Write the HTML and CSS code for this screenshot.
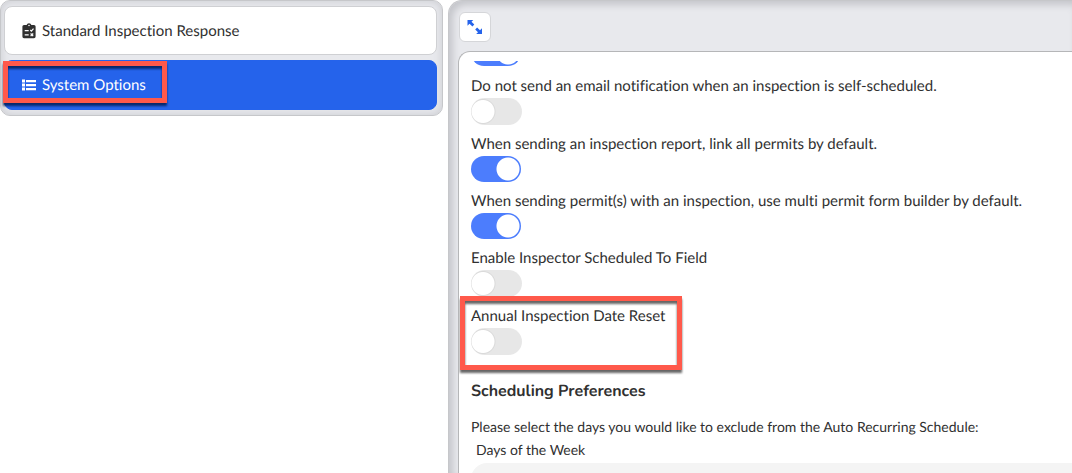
FILE: index.html
```html
<!DOCTYPE html>
<html lang="en">
<head>
<meta charset="utf-8">
<title>System Options</title>
<link rel="stylesheet" href="styles.css">
</head>
<body>
<div class="layout">
  <nav class="menu">
    <button class="menu-item" type="button">
      <svg class="menu-icon" viewBox="0 0 14 16" aria-hidden="true"><path fill="currentColor" fill-rule="evenodd" d="M2 2h2.600a2.500 2.500 0 0 1 4.800 0H12a1.600 1.600 0 0 1 1.600 1.600v10A1.600 1.600 0 0 1 12 15.200H2a1.600 1.600 0 0 1-1.600-1.600v-10A1.600 1.600 0 0 1 2 2zM7 1.700a.8.800 0 1 0 0 1.600.8.800 0 0 0 0-1.600z"/><path d="M2.700 7.600h4M2.700 11.800h4M8.300 7l1.100 1.200L11.500 5.700M8.600 10.500l2.600 2.600M11.200 10.500l-2.600 2.600" fill="none" stroke="#fff" stroke-width="1.200"/></svg>
      <span>Standard Inspection Response</span>
    </button>
    <button class="menu-item active" type="button">
      <svg class="menu-icon" viewBox="0 0 14 16" aria-hidden="true"><path fill="currentColor" d="M0 2.500h3v3H0zM0 6.500h3v3H0zM0 10.500h3v3H0zM4 3h10v2.200H4zM4 7h10v2.200H4zM4 11h10v2.200H4z"/></svg>
      <span>System Options</span>
      <span class="callout callout-menu"></span>
    </button>
  </nav>
  <main class="panel">
    <button class="expand" type="button" aria-label="Expand">
      <svg viewBox="0 0 16 16" aria-hidden="true"><path fill="#2563eb" d="M.5 1h5.800L4.500 2.800 7.300 5.600 5.400 7.500 2.500 4.700.5 6.700zM15 15H9.200L11 13.200 8.200 10.400 10.100 8.500 13 11.300 15 9.300z"/></svg>
    </button>
    <section class="card">
      <div class="scroller">
        <input class="switch scrolled" type="checkbox" checked aria-label="Previous option">
        <div class="option"><label for="o1">Do not send an email notification when an inspection is self-scheduled.</label><input class="switch" id="o1" type="checkbox"></div>
        <div class="option"><label for="o2">When sending an inspection report, link all permits by default.</label><input class="switch" id="o2" type="checkbox" checked></div>
        <div class="option"><label for="o3">When sending permit(s) with an inspection, use multi permit form builder by default.</label><input class="switch" id="o3" type="checkbox" checked></div>
        <div class="option"><label for="o4">Enable Inspector Scheduled To Field</label><input class="switch" id="o4" type="checkbox"></div>
        <div class="option"><label for="o5">Annual Inspection Date Reset</label><input class="switch" id="o5" type="checkbox"><span class="callout callout-option"></span></div>
        <h2>Scheduling Preferences</h2>
        <p>Please select the days you would like to exclude from the Auto Recurring Schedule:</p>
        <label class="field-label" for="days">Days of the Week</label>
        <input class="field" id="days" type="text">
      </div>
    </section>
  </main>
</div>
</body>
</html>
```
FILE: styles.css
```css
* { box-sizing: border-box; }
body {
  margin: 0;
  height: 100vh;
  overflow: hidden;
  background: #fff;
  color: #303030;
  font: 15px/20px Lato, "Liberation Sans", sans-serif;
  font-variant-ligatures: none;
  text-rendering: geometricPrecision;
}
button {
  font: inherit;
  font-variant-ligatures: none;
  text-rendering: inherit;
  color: inherit;
  cursor: pointer;
}
.layout {
  display: grid;
  grid-template-columns: 443fr 624fr;
  gap: 5px;
  height: 100%;
}
.menu {
  align-self: start;
  display: flex;
  flex-direction: column;
  gap: 5px;
  padding: 5px 5px 5px 3px;
  border: 1px solid #c6c7ca;
  border-radius: 10px;
  background: #e8e9ed;
  box-shadow: inset 0 0 8px #c9cacf;
}
.menu-item {
  position: relative;
  display: flex;
  align-items: center;
  gap: 6px;
  height: 49px;
  padding: 0 17px;
  border: 1px solid #cfd0d3;
  border-radius: 8px;
  background: #fff;
}
.menu-item.active {
  height: 50px;
  border-color: #2563eb;
  background: #2563eb;
  color: #fff;
}
.menu-icon { width: 14px; height: 16px; }
.callout {
  position: absolute;
  border: 5px solid #ff594b;
  pointer-events: none;
}
.callout-menu {
  top: 0;
  left: -2px;
  width: 164px;
  height: 42px;
  filter: drop-shadow(0 3px 1px #001a4dcc);
}
.callout-option {
  top: -10px;
  left: -11px;
  width: 222px;
  height: 74px;
  filter: drop-shadow(0 3px 1px #0009);
}
.panel {
  display: flex;
  flex-direction: column;
  gap: 9px;
  min-width: 0;
  min-height: 0;
  padding: 11px 0 0 9px;
  border: 1px solid #c6c7ca;
  border-width: 1px 0 0 1px;
  border-radius: 14px 0 0 0;
  background: #e8e9ed;
  box-shadow: inset 4px 4px 7px #c5c6cb;
}
.expand {
  display: grid;
  place-items: center;
  flex: none;
  width: 32px;
  height: 30px;
  margin-left: 1px;
  padding: 0;
  border: 1px solid #d5d6d9;
  border-radius: 6px;
  background: #fff;
}
.expand svg { width: 16px; height: 16px; }
.card {
  flex: 1;
  min-height: 0;
  padding: 9px 0 0 12px;
  border: 1px solid #b5b6b8;
  border-width: 1px 0 0 1px;
  border-radius: 12px 0 0 0;
  background: #fff;
}
.scroller { height: 100%; overflow: hidden; margin-left: -12px; padding-left: 12px; }
.option { position: relative; padding-bottom: 9px; }
.option label { display: block; height: 22px; }
.switch {
  appearance: none;
  display: block;
  width: 51px;
  height: 27px;
  margin: 0;
  border-radius: 14px;
  background: radial-gradient(circle at 12px 50%, #fff 11px, #dadada 12px, #e7e7e7 13px);
}
.switch:checked {
  width: 50px;
  height: 26px;
  background: radial-gradient(circle at 37px 50%, #fff 11px, #4c7dfd 12px);
}
.switch.scrolled { margin: -21px 0 10px; }
h2 {
  margin: 17px 0 16px;
  font: 700 16px/20px Nunito, Lato, sans-serif;
}
p { margin: 0; font-size: 14px; }
.field-label {
  display: block;
  padding: 3px 5px;
  font-size: 14px;
}
.field {
  width: 100%;
  height: 38px;
  border: 0;
  border-radius: 16px 0 0 16px;
  background: #f4f4f4;
}
```
